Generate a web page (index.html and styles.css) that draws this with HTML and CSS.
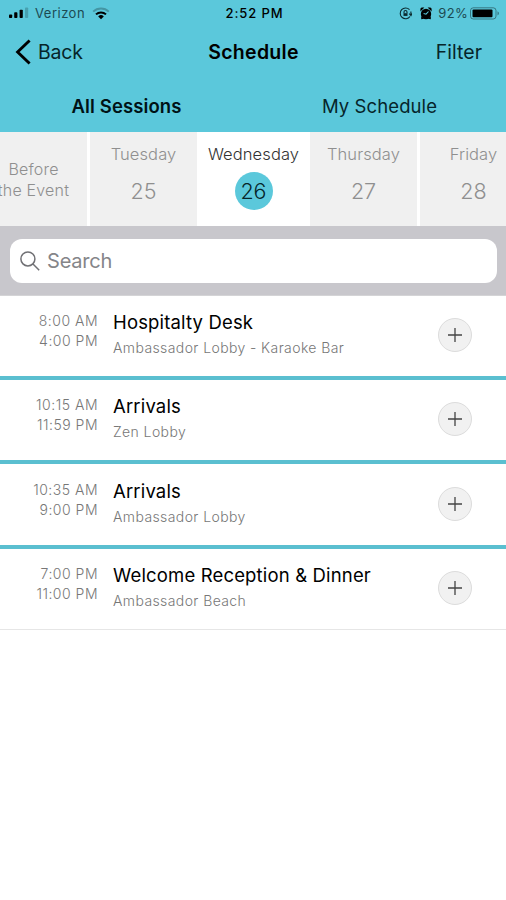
FILE: index.html
```html
<!DOCTYPE html>
<html lang="en">
<head>
  <meta charset="UTF-8">
  <meta name="viewport" content="width=device-width,initial-scale=1">
  <title>Schedule</title>
  <link rel="stylesheet" href="styles.css">
</head>
<body>
  <header class="header">
    <div class="status-bar">
      <div class="carrier">
        <svg class="signal" width="20" height="12" viewBox="0 0 20 12">
          <rect x="0" y="7.5" width="3.2" height="3.5" rx="0.8"/>
          <rect x="5.2" y="5.3" width="3.2" height="5.7" rx="0.8"/>
          <rect x="10.6" y="2.8" width="3.2" height="8.2" rx="0.8"/>
          <rect x="16" y="0.5" width="3.2" height="10.5" rx="0.8" opacity="0.2"/>
        </svg>
        <span class="carrier-name">Verizon</span>
        <svg class="wifi" width="18" height="13" viewBox="0 0 18 13">
          <path d="M1.2 4.6a11.2 11.2 0 0 1 15.6 0" fill="none" stroke="#000" stroke-width="2" opacity="0.25"/>
          <path d="M4 7.4a7.2 7.2 0 0 1 10 0" fill="none" stroke="#000" stroke-width="2"/>
          <path d="M6.2 9.4a4 4 0 0 1 5.6 0L9 12.2z"/>
        </svg>
      </div>
      <div class="clock">2:52 PM</div>
      <div class="indicators">
        <svg class="lock" width="13" height="13" viewBox="0 0 13 13" fill="none" stroke="#0b2a2e" stroke-width="1.1">
          <path d="M10.5 2.6A5.4 5.4 0 1 0 11 9.5"/>
          <path d="M11.9 4.5v4M10.2 6.6l1.8 2 1-2"/>
          <path d="M5 6.3V5a1.5 1.5 0 0 1 3 0v1.3"/>
          <rect x="4.5" y="6.2" width="4" height="2.7" fill="#0b2a2e" stroke="none"/>
        </svg>
        <svg class="alarm" width="12" height="13" viewBox="0 0 12 13">
          <circle cx="6" cy="7" r="5.2"/>
          <path d="M0.4 4.6V2a1.5 1.5 0 0 1 1.5-1.5h2.5zM11.6 4.6V2a1.5 1.5 0 0 0-1.5-1.5H7.6zM1.2 12.2v-3l3 2.5zM10.8 12.2v-3l-3 2.5z"/>
          <path d="M8.5 4.5L6 7.2 3.6 6.5" fill="none" stroke="#5bc8db" stroke-width="1.1"/>
        </svg>
        <span class="battery-level">92%</span>
        <svg class="battery" width="30" height="13" viewBox="0 0 30 13">
          <rect x="0.5" y="0.8" width="25.5" height="11.2" rx="2.8" fill="none" stroke="#000" opacity="0.4"/>
          <rect x="2.5" y="2.6" width="20" height="7.6" rx="1"/>
          <path d="M27.5 4.3c2 .8 2 3.4 0 4.2z" opacity="0.4"/>
        </svg>
      </div>
    </div>
    <nav class="nav-bar">
      <a class="back">
        <svg width="17" height="28" viewBox="0 0 17 28" fill="none" stroke="#000" stroke-width="2.9">
          <path d="M14.6 2.5L2.6 14l12 11.5"/>
        </svg>
        <span>Back</span>
      </a>
      <h1 class="title">Schedule</h1>
      <a class="filter">Filter</a>
    </nav>
    <div class="tabs">
      <a class="tab active">All Sessions</a>
      <a class="tab">My Schedule</a>
    </div>
  </header>

  <div class="days">
    <div class="day before"><span class="before-text">Before<br>the Event</span></div>
    <div class="day"><span class="day-name">Tuesday</span><span class="day-num">25</span></div>
    <div class="day selected"><span class="day-name">Wednesday</span><span class="day-num">26</span></div>
    <div class="day"><span class="day-name">Thursday</span><span class="day-num">27</span></div>
    <div class="day"><span class="day-name">Friday</span><span class="day-num">28</span></div>
  </div>

  <div class="search-bar">
    <div class="search-box">
      <svg width="20" height="20" viewBox="0 0 20 20" fill="none" stroke="#707074" stroke-width="1.5">
        <circle cx="7.9" cy="7.9" r="7"/>
        <path d="M13 13l6.2 6.2"/>
      </svg>
      <span>Search</span>
    </div>
  </div>

  <main class="sessions">
    <div class="session">
      <div class="time">8:00 AM<br>4:00 PM</div>
      <div class="info">
        <div class="name">Hospitalty Desk</div>
        <div class="place">Ambassador Lobby - Karaoke Bar</div>
      </div>
      <button class="add-btn"><svg width="14" height="14" viewBox="0 0 14 14"><path d="M7 0v14M0 7h14"/></svg></button>
    </div>
    <div class="session">
      <div class="time">10:15 AM<br>11:59 PM</div>
      <div class="info">
        <div class="name">Arrivals</div>
        <div class="place">Zen Lobby</div>
      </div>
      <button class="add-btn"><svg width="14" height="14" viewBox="0 0 14 14"><path d="M7 0v14M0 7h14"/></svg></button>
    </div>
    <div class="session">
      <div class="time">10:35 AM<br>9:00 PM</div>
      <div class="info">
        <div class="name">Arrivals</div>
        <div class="place">Ambassador Lobby</div>
      </div>
      <button class="add-btn"><svg width="14" height="14" viewBox="0 0 14 14"><path d="M7 0v14M0 7h14"/></svg></button>
    </div>
    <div class="session">
      <div class="time">7:00 PM<br>11:00 PM</div>
      <div class="info">
        <div class="name">Welcome Reception &amp; Dinner</div>
        <div class="place">Ambassador Beach</div>
      </div>
      <button class="add-btn"><svg width="14" height="14" viewBox="0 0 14 14"><path d="M7 0v14M0 7h14"/></svg></button>
    </div>
  </main>
</body>
</html>
```
FILE: styles.css
```css
* { box-sizing: border-box; }
body { margin: 0; background: #fff; font-family: Inter, "Liberation Sans", sans-serif; color: #000; overflow: hidden; }
svg { display: block; flex: none; }

/* Header */
.header { height: 132px; background: #5bc8db; }
.status-bar { display: grid; grid-template-columns: 1fr auto 1fr; align-items: center; height: 27px; padding: 0 6px 1px 9px; font-size: 13px; }
.carrier { display: flex; align-items: center; }
.carrier-name { margin: 0 7px 0 6px; color: #1c4a52; letter-spacing: 0.5px; }
.clock { font-weight: 500; letter-spacing: 0.9px; }
.indicators { display: flex; align-items: center; justify-content: flex-end; }
.alarm { margin: 0 6px 0 8px; }
.battery-level { margin-right: 2px; color: #1c4a52; letter-spacing: 0.3px; }

.nav-bar { display: grid; grid-template-columns: 1fr auto 1fr; align-items: center; height: 50px; padding: 0 24px 0 15px; font-size: 19.5px; }
.back { display: flex; align-items: center; gap: 6px; color: #06252a; }
.back span { letter-spacing: -0.2px; }
.title { margin: 0 -5px 0 5px; font-size: 19.5px; font-weight: 600; letter-spacing: 0.3px; }
.filter { text-align: right; color: #06252a; }

.tabs { display: grid; grid-template-columns: 1fr 1fr; height: 55px; align-items: center; padding-top: 2px; }
.tab { text-align: center; font-size: 18.5px; color: #06252a; letter-spacing: 0.1px; }
.tab.active { font-weight: 600; color: #001215; }

/* Days */
.days { display: grid; grid-template-columns: 90px 107px 113px 110px 107px; height: 94px; width: 527px; background: #fff; }
.day { display: flex; flex-direction: column; align-items: center; padding-top: 12px; background: #f0f0f0; color: #8f8f8f; }
.day:nth-child(1), .day:nth-child(4) { border-right: 3px solid #fff; }
.day-name { font-size: 16.5px; line-height: 20px; font-weight: 300; letter-spacing: 0.1px; }
.day-num { display: flex; align-items: center; justify-content: center; width: 38px; height: 38px; margin-top: 8px; font-size: 21.5px; font-weight: 300; }
.before { padding-top: 27px; }
.before-text { margin-left: -20px; text-align: center; font-size: 16px; line-height: 20.5px; font-weight: 300; white-space: nowrap; letter-spacing: 0.2px; }
.selected { background: #fff; color: #333; }
.selected .day-num { border-radius: 50%; background: #5bc8db; color: #06252a; }

/* Search */
.search-bar { height: 69px; padding: 12.5px 9px 12px 10px; background: #c8c7cc; }
.search-box { display: flex; align-items: center; gap: 7px; height: 44.5px; padding-left: 10px; border-radius: 12px; background: #fff; color: #858589; font-size: 20px; letter-spacing: -0.2px; }

/* Sessions */
.sessions { border-top: 1px solid #d4d4d6; }
.session { display: flex; height: 84.3px; padding-top: 15.4px; border-bottom: 4px solid #5bbfd0; }
.session:first-child { height: 84px; }
.session:last-child { height: 81px; border-bottom: 1px solid #e6e6e6; }
.time { width: 98px; text-align: right; font-size: 14px; line-height: 20px; font-weight: 300; color: #777; letter-spacing: 0.5px; }
.info { flex: 1; padding-left: 15px; }
.name { font-size: 18.5px; line-height: 22px; letter-spacing: 0.16px; }
.place { margin-top: 5px; font-size: 14px; line-height: 20px; font-weight: 300; color: #777; letter-spacing: 0.4px; }
.add-btn { display: flex; align-items: center; justify-content: center; width: 34px; height: 34px; margin: 7px 34px 0 0; padding: 0; border: 1px solid #dcdcdc; border-radius: 50%; background: #f1f1f1; }
.add-btn path { stroke: #444; stroke-width: 1.3; }
```
